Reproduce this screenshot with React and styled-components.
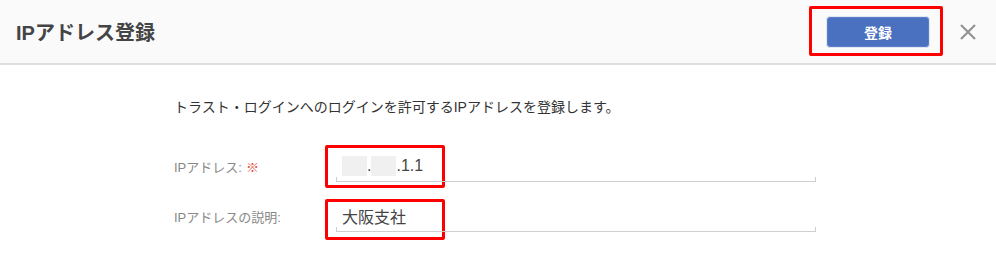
import styled, { createGlobalStyle } from "styled-components";

const GlobalStyle = createGlobalStyle`
  body {
    margin: 0;
    background: #fff;
    font-family: "Liberation Sans", "Noto Sans CJK JP", sans-serif;
  }
`;

const Page = styled.div`
  width: 996px;
  height: 269px;
  background: #fff;
  overflow: hidden;
`;

const Header = styled.div`
  height: 63px;
  display: flex;
  align-items: center;
  justify-content: space-between;
  padding: 0 20px 0 16px;
  background: #fafafa;
  border-bottom: 2px solid #dedede;
`;

const Title = styled.h1`
  margin: 0;
  font-size: 20px;
  font-weight: bold;
  color: #444;
`;

const Actions = styled.div`
  display: flex;
  align-items: center;
  gap: 30px;
`;

const ButtonWrap = styled.div`
  position: relative;
  display: flex;
`;

const SaveButton = styled.button`
  width: 104px;
  height: 32px;
  border: 1px solid #dfe6f2;
  border-radius: 4px;
  background: #4a70c0;
  box-shadow: inset 0 0 0 1px #5b7fc8;
  color: #fff;
  font-family: "Noto Sans CJK JP", sans-serif;
  font-size: 14px;
  font-weight: bold;
  cursor: pointer;
`;

const Mark = styled.div`
  position: absolute;
  left: ${(p) => p.left}px;
  top: ${(p) => p.top}px;
  width: ${(p) => p.w}px;
  height: ${(p) => p.h}px;
  box-sizing: border-box;
  border: 3px solid #f00;
  border-radius: 2px;
  pointer-events: none;
`;

const Close = styled.button`
  width: 16px;
  height: 16px;
  padding: 0;
  border: none;
  background: none;
  display: flex;
  cursor: pointer;
`;

const Body = styled.div`
  padding: 32px 0 0 174px;
`;

const Desc = styled.p`
  margin: 0;
  font-size: 14px;
  line-height: 20px;
  color: #333;
`;

const Form = styled.div`
  margin-top: 33px;
  display: flex;
  flex-direction: column;
  gap: 18px;
`;

const Row = styled.div`
  display: flex;
  align-items: center;
  height: 32px;
`;

const Label = styled.label`
  width: 162px;
  font-size: 13px;
  color: #888;
`;

const Required = styled.span`
  color: #ec4f45;
  margin-left: 4px;
`;

const Field = styled.div`
  position: relative;
  width: 480px;
  height: 32px;
  display: flex;
  align-items: center;
  padding-left: 6px;
  box-sizing: border-box;
  font-size: 16px;
  color: #444;

  &::after {
    content: "";
    position: absolute;
    left: 0;
    right: 0;
    bottom: 0;
    height: 4px;
    border: 1px solid #cfcfcf;
    border-top: none;
  }
`;

const Blur = styled.span`
  display: inline-block;
  width: 25px;
  height: 20px;
  background: #f0f0f0;
  filter: blur(0.5px);
`;

export default function App() {
  return (
    <Page>
      <GlobalStyle />
      <Header>
        <Title>IPアドレス登録</Title>
        <Actions>
          <ButtonWrap>
            <SaveButton>登録</SaveButton>
            <Mark left={-17} top={-10} w={134} h={50} />
          </ButtonWrap>
          <Close aria-label="close">
            <svg width="16" height="16" viewBox="0 0 16 16">
              <path d="M1 1L15 15M15 1L1 15" stroke="#8f8f8f" strokeWidth="2" />
            </svg>
          </Close>
        </Actions>
      </Header>
      <Body>
        <Desc>トラスト・ログインへのログインを許可するIPアドレスを登録します。</Desc>
        <Form>
          <Row>
            <Label>
              IPアドレス:<Required>※</Required>
            </Label>
            <Field>
              <Blur />.<Blur />.1.1
              <Mark left={-11} top={-5} w={120} h={43} />
            </Field>
          </Row>
          <Row>
            <Label>IPアドレスの説明:</Label>
            <Field>
              大阪支社
              <Mark left={-11} top={-1} w={120} h={41} />
            </Field>
          </Row>
        </Form>
      </Body>
    </Page>
  );
}
